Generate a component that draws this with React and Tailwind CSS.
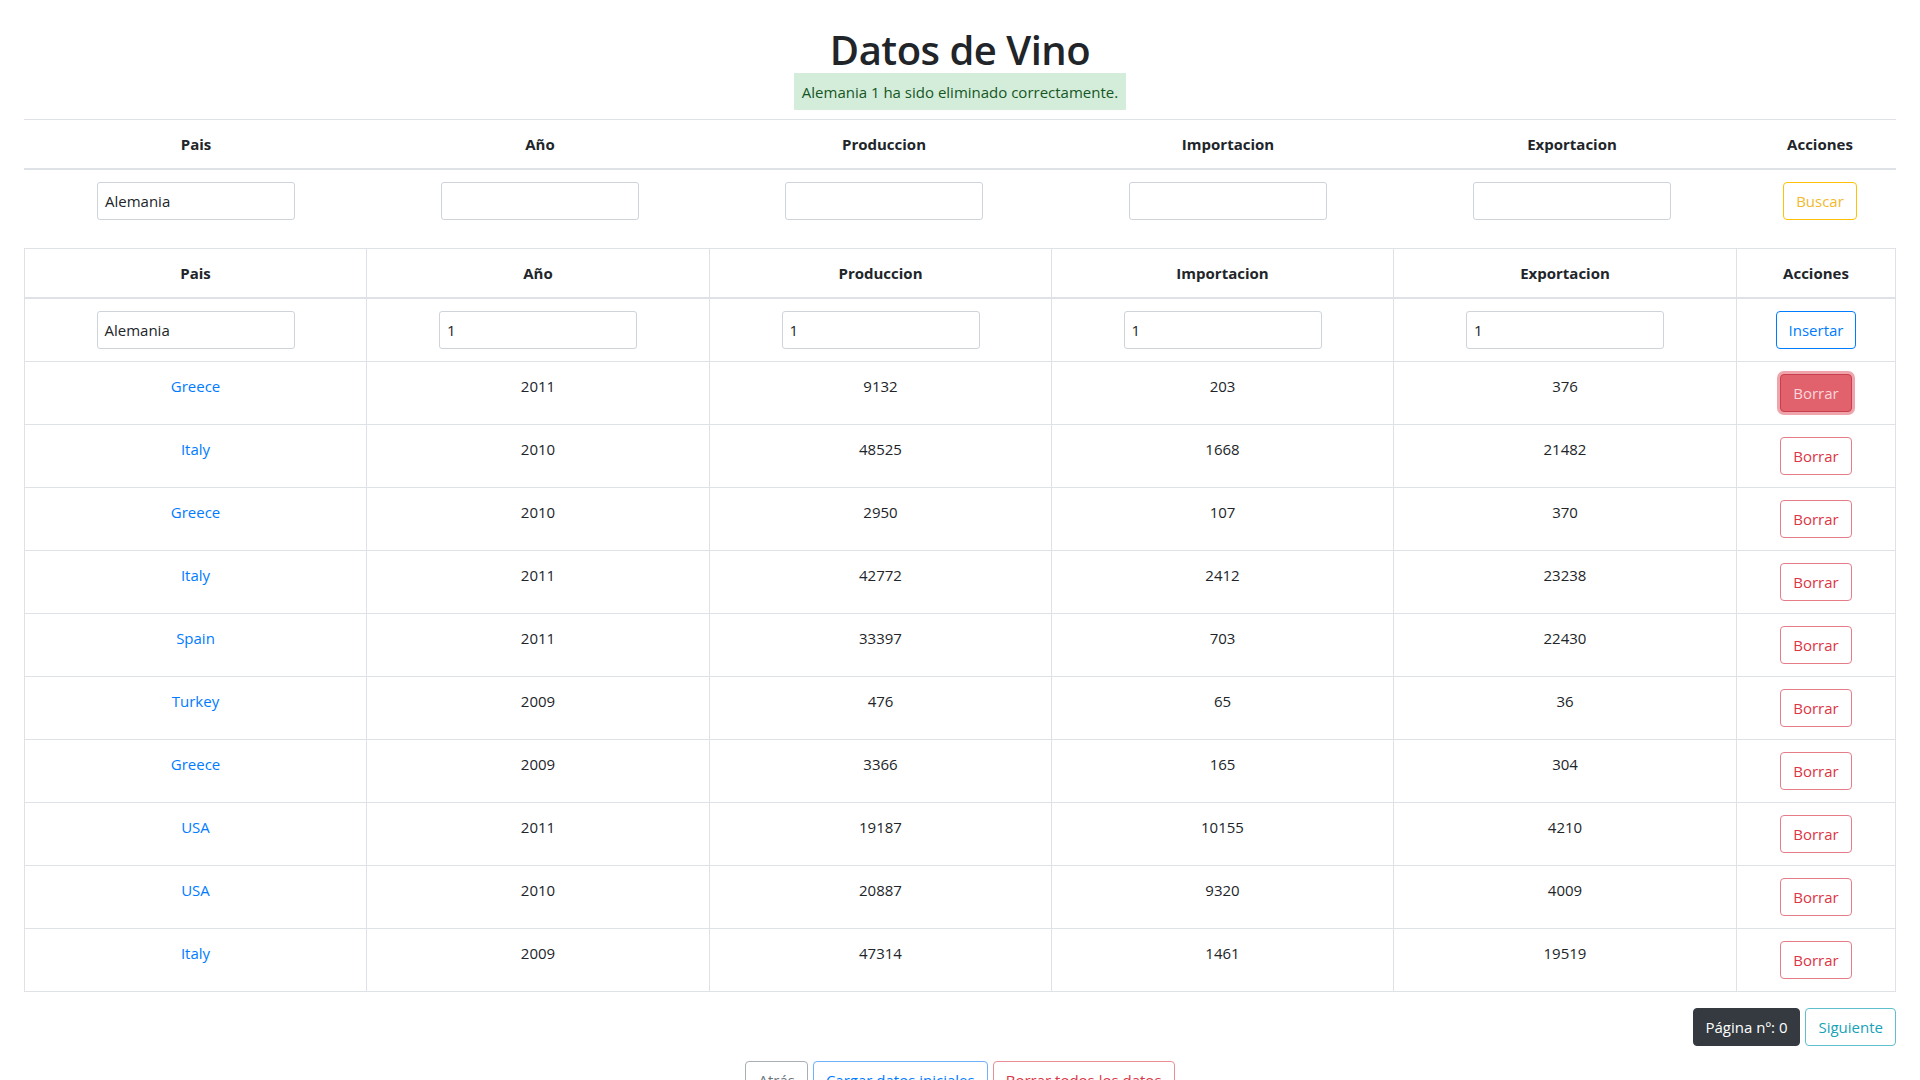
const rows = [
  ["Greece", "2011", "9132", "203", "376"],
  ["Italy", "2010", "48525", "1668", "21482"],
  ["Greece", "2010", "2950", "107", "370"],
  ["Italy", "2011", "42772", "2412", "23238"],
  ["Spain", "2011", "33397", "703", "22430"],
  ["Turkey", "2009", "476", "65", "36"],
  ["Greece", "2009", "3366", "165", "304"],
  ["USA", "2011", "19187", "10155", "4210"],
  ["USA", "2010", "20887", "9320", "4009"],
  ["Italy", "2009", "47314", "1461", "19519"],
];

const heads = ["Pais", "Año", "Produccion", "Importacion", "Exportacion", "Acciones"];

function Input({ value }) {
  return (
    <div className="flex justify-center">
      <div className="w-[198px] h-[38px] border border-[#ced4da] rounded-[3px] bg-white px-[7px] flex items-center text-left text-[#212529]">
        {value}
      </div>
    </div>
  );
}

export default function App() {
  return (
    <div className="min-h-screen bg-white font-['Open_Sans','Liberation_Sans',sans-serif] text-[15px] leading-[24px] text-[#212529]">
      <div className="px-[24px] pt-[27px]">
        <h1 className="text-center text-[40px] leading-[46px] font-semibold tracking-[-0.5px]">Datos de Vino</h1>
        <div className="flex justify-center">
          <div className="bg-[#d4edda] text-[#155724] px-[8px] h-[37px] flex items-center">
            Alemania 1 ha sido eliminado correctamente.
          </div>
        </div>

        <table className="mt-[9px] w-full border-collapse table-fixed">
          <colgroup>
            <col className="w-[344px]" />
            <col className="w-[344px]" />
            <col className="w-[344px]" />
            <col className="w-[344px]" />
            <col className="w-[344px]" />
            <col />
          </colgroup>
          <thead>
            <tr>
              {heads.map((h) => (
                <th key={h} className="border-t border-b-2 border-[#dee2e6] px-[12px] py-[12px] font-bold text-center">
                  {h}
                </th>
              ))}
            </tr>
          </thead>
          <tbody>
            <tr>
              <td className="px-[12px] py-[12px]"><Input value="Alemania" /></td>
              <td className="px-[12px] py-[12px]"><Input value="" /></td>
              <td className="px-[12px] py-[12px]"><Input value="" /></td>
              <td className="px-[12px] py-[12px]"><Input value="" /></td>
              <td className="px-[12px] py-[12px]"><Input value="" /></td>
              <td className="px-[12px] py-[12px]">
                <div className="flex justify-center">
                  <button className="h-[38px] px-[12px] border border-[#ffc107] text-[#f2b92d] rounded-[4px] bg-white">Buscar</button>
                </div>
              </td>
            </tr>
          </tbody>
        </table>

        <table className="mt-[16px] w-full border-collapse table-fixed">
          <colgroup>
            <col className="w-[342px]" />
            <col className="w-[343px]" />
            <col className="w-[342px]" />
            <col className="w-[342px]" />
            <col className="w-[343px]" />
            <col />
          </colgroup>
          <thead>
            <tr>
              {heads.map((h) => (
                <th key={h} className="border border-b-2 border-[#dee2e6] px-[12px] py-[12px] font-bold text-center">
                  {h}
                </th>
              ))}
            </tr>
          </thead>
          <tbody>
            <tr>
              <td className="border border-[#dee2e6] px-[12px] py-[12px]"><Input value="Alemania" /></td>
              <td className="border border-[#dee2e6] px-[12px] py-[12px]"><Input value="1" /></td>
              <td className="border border-[#dee2e6] px-[12px] py-[12px]"><Input value="1" /></td>
              <td className="border border-[#dee2e6] px-[12px] py-[12px]"><Input value="1" /></td>
              <td className="border border-[#dee2e6] px-[12px] py-[12px]"><Input value="1" /></td>
              <td className="border border-[#dee2e6] px-[12px] py-[12px]">
                <div className="flex justify-center">
                  <button className="h-[38px] px-[12px] border border-[#007bff] text-[#007bff] rounded-[4px] bg-white">Insertar</button>
                </div>
              </td>
            </tr>
            {rows.map((r, i) => (
              <tr key={i}>
                <td className="border border-[#dee2e6] px-[12px] py-[12px] align-top text-center text-[#007bff]">{r[0]}</td>
                <td className="border border-[#dee2e6] px-[12px] py-[12px] align-top text-center">{r[1]}</td>
                <td className="border border-[#dee2e6] px-[12px] py-[12px] align-top text-center">{r[2]}</td>
                <td className="border border-[#dee2e6] px-[12px] py-[12px] align-top text-center">{r[3]}</td>
                <td className="border border-[#dee2e6] px-[12px] py-[12px] align-top text-center">{r[4]}</td>
                <td className="border border-[#dee2e6] px-[12px] py-[12px] align-top">
                  <div className="flex justify-center">
                    {i === 0 ? (
                      <button className="h-[38px] px-[12px] border border-[#c8404f] bg-[#e1616d] text-[#fbd6da] rounded-[4px] shadow-[0_0_0_3px_rgba(220,53,69,0.45)]">Borrar</button>
                    ) : (
                      <button className="h-[38px] px-[12px] border border-[#e57d88] text-[#dc3545] rounded-[4px] bg-white">Borrar</button>
                    )}
                  </div>
                </td>
              </tr>
            ))}
          </tbody>
        </table>

        <div className="mt-[16px] flex justify-end gap-[5px]">
          <button className="h-[38px] px-[12px] bg-[#343a40] border border-[#343a40] text-white rounded-[4px]">Página nº: 0</button>
          <button className="h-[38px] px-[12px] border border-[#5fbfcd] text-[#17a2b8] rounded-[4px] bg-white">Siguiente</button>
        </div>

        <div className="mt-[15px] pb-[40px] flex justify-center gap-[5px]">
          <button className="h-[38px] px-[12px] border border-[#a9aeb3] text-[#6c757d] rounded-[4px] bg-white">Atrás</button>
          <button className="h-[38px] px-[12px] border border-[#6fb1fb] text-[#007bff] rounded-[4px] bg-white">Cargar datos iniciales</button>
          <button className="h-[38px] px-[12px] border border-[#e98e97] text-[#dc3545] rounded-[4px] bg-white">Borrar todos los datos</button>
        </div>
      </div>
    </div>
  );
}
